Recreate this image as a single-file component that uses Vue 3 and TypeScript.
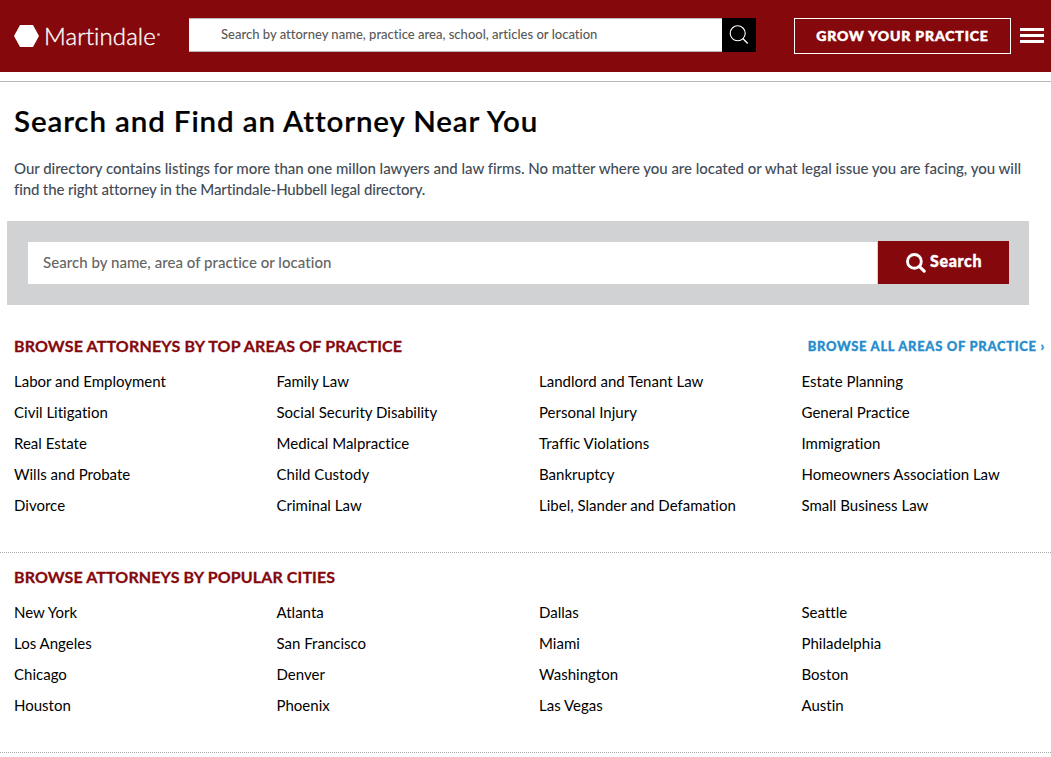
<script setup lang="ts">
const areas: string[] = [
  'Labor and Employment', 'Family Law', 'Landlord and Tenant Law', 'Estate Planning',
  'Civil Litigation', 'Social Security Disability', 'Personal Injury', 'General Practice',
  'Real Estate', 'Medical Malpractice', 'Traffic Violations', 'Immigration',
  'Wills and Probate', 'Child Custody', 'Bankruptcy', 'Homeowners Association Law',
  'Divorce', 'Criminal Law', 'Libel, Slander and Defamation', 'Small Business Law',
]
const cities: string[] = [
  'New York', 'Atlanta', 'Dallas', 'Seattle',
  'Los Angeles', 'San Francisco', 'Miami', 'Philadelphia',
  'Chicago', 'Denver', 'Washington', 'Boston',
  'Houston', 'Phoenix', 'Las Vegas', 'Austin',
]
</script>

<template>
  <div class="page">
    <header class="top">
      <a class="logo">
        <svg class="hex" width="25" height="22" viewBox="0 0 25 22"><path d="M6 0H19L25 11L19 22H6L0 11Z" fill="#fff" /></svg>
        <span class="brand">Martindale</span><span class="dot"></span>
      </a>
      <div class="quick">
        <div class="quick-input"><span>Search by attorney name, practice area, school, articles or location</span></div>
        <button class="quick-btn" aria-label="Search">
          <svg width="20" height="20" viewBox="0 0 20 20" fill="none" stroke="#fff" stroke-width="1.1"><circle cx="8.7" cy="8.3" r="7.5" /><path d="M13.8 13.6L18.7 18.4" stroke-width="1.4" /></svg>
        </button>
      </div>
      <a class="grow"><span>GROW YOUR PRACTICE</span></a>
      <div class="burger"><i></i><i></i><i></i></div>
    </header>
    <main>
      <h1><span>Search and Find an Attorney Near You</span></h1>
      <p class="intro">
        <span class="l1">Our directory contains listings for more than one millon lawyers and law firms. No matter where you are located or what legal issue you are facing, you will</span><br>
        <span class="l2">find the right attorney in the Martindale-Hubbell legal directory.</span>
      </p>
      <div class="panel">
        <div class="field"><span>Search by name, area of practice or location</span></div>
        <button class="go">
          <svg width="20" height="20" viewBox="0 0 20 20" fill="none" stroke="#fff"><circle cx="8.4" cy="8.4" r="6.9" stroke-width="2.9" /><path d="M13.3 13.3L18.2 18.2" stroke-width="3.1" stroke-linecap="round" /></svg>
          <span>Search</span>
        </button>
      </div>
      <section class="block areas">
        <div class="head">
          <h2 class="h-areas">BROWSE ATTORNEYS BY TOP AREAS OF PRACTICE</h2>
          <a class="all">BROWSE ALL AREAS OF PRACTICE ›</a>
        </div>
        <ul><li v-for="a in areas" :key="a"><span>{{ a }}</span></li></ul>
      </section>
      <section class="block cities">
        <div class="head"><h2 class="h-cities">BROWSE ATTORNEYS BY POPULAR CITIES</h2></div>
        <ul><li v-for="c in cities" :key="c"><span>{{ c }}</span></li></ul>
      </section>
    </main>
  </div>
</template>

<style>
body { background: #fff; }
</style>

<style scoped>
* { box-sizing: border-box; }
.page { width: 100%; height: 757px; overflow: hidden; font-family: Lato, "Liberation Sans", sans-serif; font-variant-ligatures: none; color: #000; }
.top { display: flex; align-items: flex-start; height: 72px; background: #85080c; }
.logo { display: flex; width: 189px; padding: 25px 0 0 14px; }
.hex { flex: none; }
.brand { margin-left: 5px; color: #fff; font-weight: 300; font-size: 24px; line-height: 21px; letter-spacing: 0.1px; -webkit-text-stroke: 0.35px #fff; }
.dot { width: 3px; height: 3px; margin: 8px 0 0 1px; border-radius: 50%; background: #d7a9ab; }
.quick { display: flex; margin-top: 18px; width: 567px; height: 34px; }
.quick-input { flex: 1; padding-left: 32px; background: #fff; border: solid #b8b8b8; border-width: 1px 0; font-size: 13px; font-weight: 500; line-height: 30px; color: #595959; white-space: nowrap; letter-spacing: 0.01px; }
.quick-btn { width: 34px; padding: 0; border: 0; background: #000; display: flex; align-items: center; justify-content: center; }
.grow { width: 217px; height: 36px; margin: 18px 0 0 38px; border: 1px solid #fff; color: #fff; font-size: 14px; font-weight: 900; line-height: 34px; text-align: center; white-space: nowrap; letter-spacing: 0.85px; -webkit-text-stroke: 0.5px #fff; }
.burger { display: flex; flex-direction: column; gap: 3px; width: 24px; margin: 28px 0 0 9px; }
.burger i { height: 3px; background: #fff; }
main { margin-top: 9px; border-top: 1px solid #b8b8b8; }
h1 { margin: 21px 0 0 14px; font-size: 29.5px; font-weight: 600; line-height: 35px; white-space: nowrap; letter-spacing: 0.87px; -webkit-text-stroke: 0.2px #000; }
.intro { margin: 20px 0 0 14px; font-size: 15px; font-weight: 500; line-height: 21px; color: #434c57; white-space: nowrap; letter-spacing: -0.03px; }
.l2 { letter-spacing: -0.135px; }
.panel { display: flex; width: 1022px; height: 84px; margin: 21px 0 0 7px; padding: 20px 20px 21px 21px; background: #d1d2d4; }
.field { flex: 1; margin: 1px 1px 0 0; padding-left: 15px; background: #fff; font-size: 15px; font-weight: 500; line-height: 40px; color: #646464; letter-spacing: 0.04px; }
.go { display: flex; width: 131px; padding: 12px 0 0 28px; border: 0; background: #85080c; color: #fff; font: 900 16px/16px Lato, sans-serif; }
.go span { margin: 0 0 0 4px; letter-spacing: 0.65px; -webkit-text-stroke: 0.4px #fff; }
.block { border-bottom: 1px dotted #a8a8a8; }
.areas { height: 248px; padding-top: 31px; }
.cities { height: 200px; padding-top: 14px; }
.head { display: flex; justify-content: space-between; height: 20px; padding: 0 6px 0 14px; white-space: nowrap; }
h2 { margin: 0; font-size: 16px; font-weight: 700; line-height: 20px; color: #85080c; letter-spacing: 0.17px; -webkit-text-stroke: 0.3px #85080c; }
.h-cities { letter-spacing: 0.12px; }
.all { font-size: 13px; font-weight: 900; line-height: 20px; color: #268ccd; letter-spacing: 0.68px; -webkit-text-stroke: 0.3px #268ccd; }
ul { display: grid; grid-template-columns: repeat(4, 262.5px); grid-auto-rows: 31px; list-style: none; margin: 10px 0 0; padding: 0 0 0 14px; }
li { font-size: 15px; line-height: 31px; white-space: nowrap; letter-spacing: 0.01px; }
</style>
